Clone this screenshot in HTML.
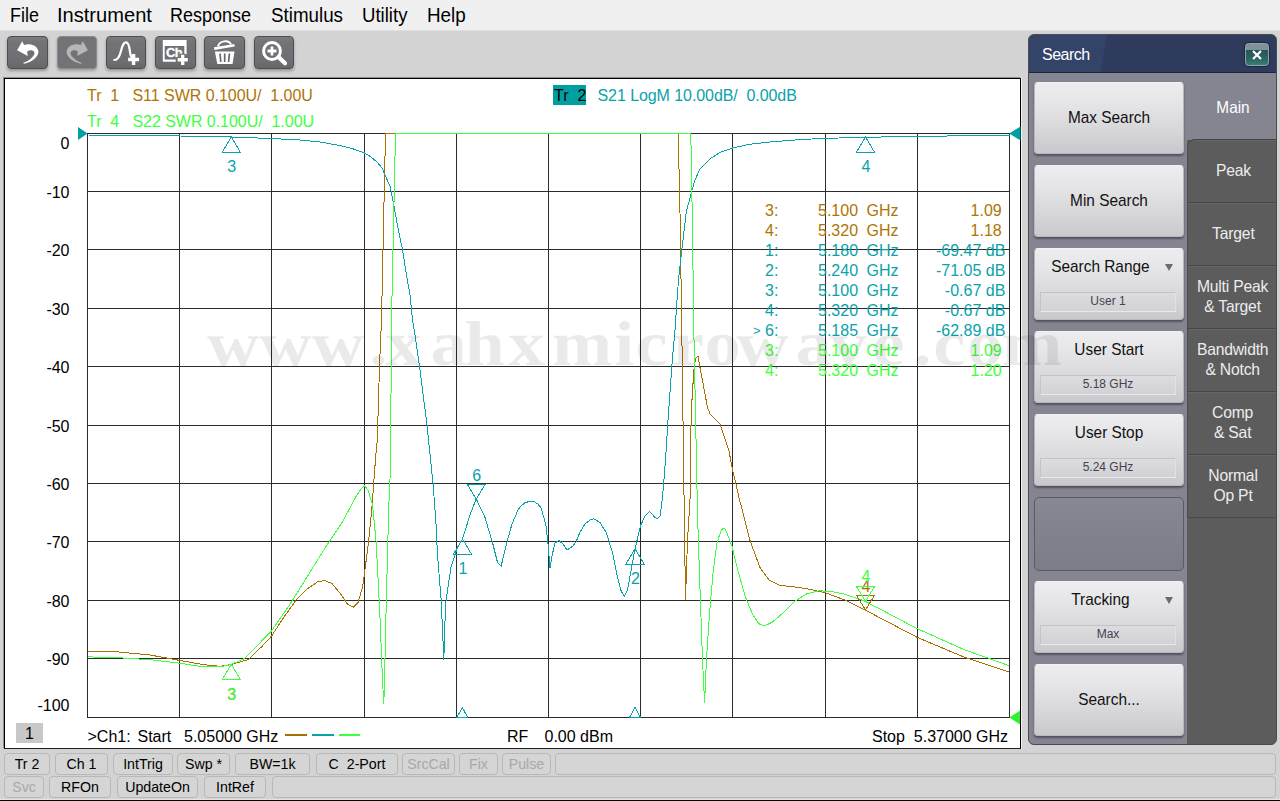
<!DOCTYPE html>
<html><head><meta charset="utf-8"><title>Network Analyzer</title>
<style>
*{box-sizing:border-box;margin:0;padding:0}
html,body{width:1280px;height:801px;overflow:hidden}
body{background:#d3d3d3;font-family:"Liberation Sans",sans-serif;position:relative;color:#000}
.abs{position:absolute}
#menubar{position:absolute;left:0;top:0;width:1280px;height:31px;background:#f0f0f0;border-bottom:1px solid #e0e0e0}
#menubar span{position:absolute;top:4px;font-size:19.5px;line-height:22px;white-space:nowrap;transform-origin:0 0}
#toolbar{position:absolute;left:0;top:31px;width:1280px;height:47px;background:#d3d3d3}
.tb{position:absolute;top:5px;width:40px;height:33px;border-radius:4px;background:linear-gradient(#7c7c80,#737377 18%,#6e6e72 80%,#67676b);border:1px solid #4e4e52;box-shadow:0 2px 3px rgba(0,0,0,.30)}
.tb.dis{background:#737377;border-color:#8a8a8e;box-shadow:0 2px 3px rgba(0,0,0,.25)}
.tb svg{position:absolute;left:-1px;top:-1px}
#plotpanel{position:absolute;left:4px;top:78px;width:1017px;height:671px;background:#fff;border:1px solid #000;border-bottom-color:#222;box-shadow:1px 0 0 #f2f2f2,-1px -1px 0 #8e8e8e}
svg.plot{position:absolute;left:0;top:0}
svg.plot text{font-family:"Liberation Sans",sans-serif}
#wm{position:absolute;left:0;top:0;pointer-events:none}
#wm text{font-family:"Liberation Serif",serif;font-weight:bold;font-size:64px;fill:rgba(0,0,0,0.082)}
.ax{font-size:16px;fill:#000}
.mk{font-size:16px}
.tt{position:absolute;font-size:16px;line-height:18px;white-space:pre;margin-top:1px}
.mr{position:absolute;left:0;width:1280px;height:20px;font-size:16px;line-height:20px}
.mr span{position:absolute;top:0;white-space:pre}
#chbox{position:absolute;left:16px;top:723px;width:27px;height:20px;background:#c8c8c8;font-size:16px;line-height:22px;text-align:center}
/* right panel */
#rp{position:absolute;left:1028px;top:34px;width:249px;height:711px;background:#5c5c5c;border-radius:6px;overflow:hidden;border:1px solid #4a4a50;box-shadow:inset 1px 0 0 #55555e}
#rptitle{position:absolute;left:0;top:0;width:249px;height:38px;background:linear-gradient(100deg,#344368 0,#344368 30%,#2e3b5d 31%,#2e3b5d 100%);color:#fff;font-size:16px;letter-spacing:-0.5px;line-height:40px;padding-left:13px;border-bottom:1px solid #1c2540}
#rpclose{position:absolute;left:216px;top:8px;width:24px;height:23px;border:1px solid #93a5ab;border-radius:3.5px;background:linear-gradient(#7f9299 0,#7f9299 28%,#285656 29%,#2d6562 70%,#3a7d78 100%);box-shadow:0 0 0 1px #1e2844}
#rpleft{position:absolute;left:0;top:38px;width:158px;height:673px;background:#858591}
#maintab{position:absolute;left:158px;top:38px;width:91px;height:67px;background:#858591;color:#fff}
.tab{position:absolute;left:158px;width:91px;height:63px;background:#5c5c5c;border-top:1px solid #464646;border-left:1px solid #4a4a4a;box-shadow:inset 0 1px 0 #666;color:#ececec;font-size:16.5px;letter-spacing:-0.2px;line-height:20px;text-align:center;display:flex;align-items:center;justify-content:center}
.tl{display:block;transform:scaleX(0.95);position:relative;top:-1px}
.sk{position:absolute;left:5px;width:150px;height:72px;border-radius:4px;background:linear-gradient(#ededef 0%,#e5e5e7 30%,#d9d9dc 62%,#c9c9cd 100%);border:1px solid #b8b8bc;border-top-color:#f2f2f4;box-shadow:0 2px 2px rgba(40,40,60,.55);font-size:17px;color:#111;text-align:center}
.sk .l1{position:absolute;left:0;width:100%;top:25px;line-height:20px;transform:scaleX(0.905)}
.sk.two .l1{top:8px}
.sk .val{position:absolute;left:5px;right:7px;top:43px;height:20px;border:1px solid #c4c4c8;border-bottom-color:#e9e9eb;border-right-color:#e2e2e5;background:rgba(255,255,255,0.10);font-size:12px;letter-spacing:0;line-height:16.5px;color:#463f52}
.sk .arr{position:absolute;right:10px;top:15px;width:0;height:0;border-left:4px solid transparent;border-right:4px solid transparent;border-top:7.5px solid #6c6c6e}
.skempty{position:absolute;left:5px;width:150px;height:74px;border-radius:5px;border:1px solid #5a5a66;background:linear-gradient(#888894,#7c7c88)}
/* status */
.sb{position:absolute;height:22px;border:1px solid #b8b8b8;border-radius:4px;background:#d5d5d5;font-size:14.2px;line-height:20px;text-align:center;white-space:pre;color:#000}
.sb.dis{color:#a8a8a8}
#bottomline{position:absolute;left:0;top:799px;width:1280px;height:2px;background:#000;border-top:1px solid #e4e4e4}
</style></head><body>
<div id="menubar">
<span style="left:9.5px;transform:scaleX(0.918)">File</span><span style="left:57.4px;transform:scaleX(1.030)">Instrument</span><span style="left:170.4px;transform:scaleX(0.921)">Response</span><span style="left:270.9px;transform:scaleX(0.963)">Stimulus</span><span style="left:361.6px;transform:scaleX(0.954)">Utility</span><span style="left:427.1px;transform:scaleX(0.966)">Help</span>
</div>
<div id="toolbar">
<div class="tb" style="left:7px;width:41px"><svg width="41" height="33" viewBox="0 0 41 33"><path d="M10.1 14.2 L15.2 5.2 L17.1 9 C20 8 24.500 8 27.9 10.1 C30.500 11.8 31.8 14.500 31.3 17 C30.500 21 26 25.500 17.500 27.7 L16 27 C21 25.500 25.500 22 27.2 18.500 C28.2 16.2 27 14.6 24.500 14.2 C23 14 21.500 14.500 20.1 15.4 L20.8 19.9 Z" fill="#fff"/></svg></div>
<div class="tb dis" style="left:57px"><svg width="40" height="33" viewBox="-1 0 40 33"><path d="M29.9 14.2 L24.8 5.2 L22.9 9 C20.0 8 15.5 8 12.1 10.1 C9.5 11.8 8.2 14.500 8.7 17 C9.5 21 14.0 25.500 22.5 27.7 L24.0 27 C19.0 25.500 14.5 22 12.8 18.500 C11.8 16.2 13.0 14.6 15.5 14.2 C17.0 14 18.5 14.500 19.9 15.4 L19.2 19.9 Z" fill="#b6b6b8"/></svg></div>
<div class="tb" style="left:106px"><svg width="40" height="33" viewBox="0 0 40 33"><path d="M8.300 24 C12 24 13.500 21 15 15 C16.500 9 17.500 6.400 20 6.400 C23 6.400 23.500 12 24 16 C24.300 18.500 24.700 20 25.500 21" fill="none" stroke="#fff" stroke-width="2.200" stroke-linecap="round"/><path d="M27.600 18v11M22.100 23.500h11" stroke="#fff" stroke-width="3.400"/></svg></div>
<div class="tb" style="left:155px;width:41px"><svg width="41" height="33" viewBox="0 0 41 33"><path d="M7.800 4h23.800v14.300h-2.300v-8.200h-19.600v13.300h11v2.300h-12.900z" fill="#fff"/><text x="11" y="21.400" font-size="13" font-weight="bold" fill="#fff" stroke="#fff" stroke-width="0.3" font-family="Liberation Sans, sans-serif" letter-spacing="-0.6">Ch</text><path d="M27.700 17.700v12.200M21.600 23.800h12.200" stroke="#6a6a6c" stroke-width="5.400"/><path d="M27.700 18.700v10.200M22.600 23.800h10.200" stroke="#fff" stroke-width="3.400"/></svg></div>
<div class="tb" style="left:204px;width:41px"><svg width="41" height="33" viewBox="0 0 41 33"><path d="M14 10.500 C15 4.500 25 3.500 27 8.500" fill="none" stroke="#fff" stroke-width="2"/><path d="M10 11.200l20.300-3.300l0.400 2.700l-20.300 3.300z" fill="#fff"/><path d="M10.900 15.600h19.600l-2 12.500h-15.200z" fill="#fff"/><path d="M16 17.500l0.800 8.500M20.700 17.500v8.500M25.400 17.500l-0.800 8.500" stroke="#68686a" stroke-width="1.700"/></svg></div>
<div class="tb" style="left:254px"><svg width="40" height="33" viewBox="0 0 40 33"><circle cx="18" cy="15" r="8.400" fill="none" stroke="#fff" stroke-width="3"/><path d="M24.500 21l6.500 6.200" stroke="#fff" stroke-width="4.200" stroke-linecap="round"/><path d="M18 10.500v9M13.500 15h9" stroke="#fff" stroke-width="2.800"/></svg></div>
</div>
<div id="plotpanel"></div>
<svg class="plot" width="1280" height="801" viewBox="0 0 1280 801">
<g fill="#2c2c2c" shape-rendering="crispEdges"><rect x="87" y="133" width="1" height="585" /><rect x="179" y="133" width="1" height="585" /><rect x="271" y="133" width="1" height="585" /><rect x="364" y="133" width="1" height="585" /><rect x="456" y="133" width="1" height="585" /><rect x="548" y="133" width="1" height="585" /><rect x="640" y="133" width="1" height="585" /><rect x="732" y="133" width="1" height="585" /><rect x="825" y="133" width="1" height="585" /><rect x="917" y="133" width="1" height="585" /><rect x="1009" y="133" width="1" height="585" /><rect x="87" y="133" width="923" height="1" /><rect x="87" y="191" width="923" height="1" /><rect x="87" y="249" width="923" height="1" /><rect x="87" y="308" width="923" height="1" /><rect x="87" y="366" width="923" height="1" /><rect x="87" y="425" width="923" height="1" /><rect x="87" y="483" width="923" height="1" /><rect x="87" y="541" width="923" height="1" /><rect x="87" y="600" width="923" height="1" /><rect x="87" y="658" width="923" height="1" /><rect x="87" y="717" width="923" height="1" /></g>
<text x="69.5" y="149.0" text-anchor="end" class="ax">0</text>
<text x="69.5" y="198.1" text-anchor="end" class="ax">-10</text>
<text x="69.5" y="256.1" text-anchor="end" class="ax">-20</text>
<text x="69.5" y="315.1" text-anchor="end" class="ax">-30</text>
<text x="69.5" y="373.1" text-anchor="end" class="ax">-40</text>
<text x="69.5" y="432.1" text-anchor="end" class="ax">-50</text>
<text x="69.5" y="490.1" text-anchor="end" class="ax">-60</text>
<text x="69.5" y="548.1" text-anchor="end" class="ax">-70</text>
<text x="69.5" y="607.1" text-anchor="end" class="ax">-80</text>
<text x="69.5" y="665.1" text-anchor="end" class="ax">-90</text>
<text x="69.5" y="710.6" text-anchor="end" class="ax">-100</text>
<polyline points="87.7,651.6 115.0,651.6 150.0,655.0 179.7,660.4 202.4,664.5 220.0,666.3 231.0,664.5 248.0,659.7 262.0,646.4 271.7,635.9 283.0,618.4 296.9,599.0 307.4,588.7 317.8,581.7 324.8,580.6 331.8,583.4 340.6,593.9 347.6,604.4 353.5,607.2 358.0,602.6 362.6,586.9 365.0,569.4 368.6,541.4 372.0,506.5 375.6,457.5 377.3,440.0 379.5,366.0 381.5,320.0 385.5,133.5 678.2,133.5 680.0,212.5 681.8,330.0 683.8,480.0 685.5,600.0 687.5,540.0 690.0,500.0 691.2,412.5 693.8,371.0 695.5,358.8 698.0,356.2 700.0,367.5 703.8,387.5 707.5,407.5 710.0,413.8 715.0,418.8 720.0,423.8 723.8,435.0 728.8,450.0 732.5,470.0 736.2,485.0 739.5,500.0 742.3,510.0 749.8,540.0 760.3,568.3 769.3,580.3 779.8,585.4 794.7,586.9 809.7,589.3 825.6,592.9 845.0,600.0 865.0,610.0 917.5,637.5 965.0,657.5 1008.8,671.8" fill="none" stroke="#a87000" stroke-width="1" stroke-linejoin="round" shape-rendering="crispEdges"/>
<polyline points="87.5,135.0 143.0,135.5 180.0,136.0 231.0,137.0 271.0,138.5 300.0,140.0 320.0,142.0 340.0,145.5 352.0,148.5 364.5,153.0 371.0,157.0 377.5,162.5 382.0,168.0 385.0,175.0 390.0,186.0 393.8,205.0 398.0,228.0 402.5,249.8 406.0,272.0 410.0,295.0 412.5,320.0 414.2,330.0 419.5,366.0 427.0,425.0 433.0,483.0 435.8,520.0 437.5,555.0 441.2,600.0 443.8,659.5 445.5,605.0 447.5,590.0 451.2,566.0 457.5,547.5 462.5,538.8 470.0,515.0 476.2,498.8 485.0,517.5 492.5,542.5 497.5,562.5 501.2,566.2 503.0,558.0 507.0,542.0 512.0,524.0 518.0,510.0 521.0,506.0 525.0,502.6 530.0,501.4 534.0,501.6 538.0,504.0 541.0,508.0 544.0,518.0 546.0,526.0 548.0,544.0 550.0,568.0 552.0,556.0 555.0,543.0 559.0,540.6 563.0,544.0 567.0,550.0 570.0,548.0 573.0,546.0 576.0,542.0 580.0,532.0 585.0,524.0 590.0,520.0 593.8,518.8 600.0,522.5 606.2,532.5 612.5,552.5 617.5,577.5 621.2,591.2 624.5,596.2 627.5,590.0 631.2,570.0 635.0,548.8 640.8,525.0 645.0,516.2 649.5,511.2 653.8,516.2 657.0,519.2 660.0,516.2 662.5,497.5 664.5,472.5 665.5,460.0 668.0,420.0 672.5,357.5 675.0,330.0 677.0,300.0 678.5,280.0 681.2,255.0 686.2,212.5 692.0,190.0 695.0,180.0 700.0,168.8 710.0,158.8 720.0,152.5 732.5,148.0 750.0,144.2 770.0,142.0 795.0,140.0 820.0,138.5 865.0,137.3 920.0,136.3 1010.0,135.3" fill="none" stroke="#0aa2aa" stroke-width="1" stroke-linejoin="round" shape-rendering="crispEdges"/>
<polyline points="87.7,656.9 115.0,657.5 150.0,659.7 179.7,663.2 202.4,666.7 220.0,667.0 231.0,664.5 244.4,658.6 254.9,648.1 271.7,630.6 289.9,604.4 307.4,576.4 324.8,548.4 342.3,522.2 356.3,496.0 361.6,488.3 364.5,485.8 368.0,490.0 372.5,505.0 376.2,542.5 380.0,617.5 382.5,680.0 383.8,703.8 384.5,680.0 386.2,605.0 388.8,505.0 390.0,480.0 390.8,425.0 391.5,320.0 395.5,133.5 690.8,133.5 692.5,230.0 693.8,330.0 695.5,412.5 696.8,480.0 698.3,540.0 700.4,600.0 702.5,660.0 704.6,703.0 706.4,660.0 709.4,615.0 713.3,570.0 716.9,543.0 719.5,535.0 721.3,530.5 722.6,528.6 723.8,528.0 725.0,529.0 727.0,533.0 729.5,539.5 731.9,546.0 737.8,570.0 745.3,596.8 752.8,614.7 758.8,623.7 764.2,626.0 772.3,622.2 782.8,613.2 794.7,601.3 806.7,593.8 818.7,590.8 830.7,591.4 845.6,594.4 865.0,601.2 917.5,628.8 965.0,650.0 1008.8,665.5" fill="none" stroke="#40ff40" stroke-width="1" stroke-linejoin="round" shape-rendering="crispEdges"/>
<polygon points="78,127 87.5,133.5 78,140" fill="#00a0a0"/>
<polygon points="1020.5,126.5 1009.3,133.5 1020.5,140.5" fill="#00a0a0"/>
<polygon points="1020,710.5 1009.5,717.5 1020,724.5" fill="#30f030"/>
<polygon points="231.3,137.0 222.1,152.5 240.5,152.5" fill="none" stroke="#0aa2aa" stroke-width="1" shape-rendering="crispEdges"/><text x="231.8" y="172.0" fill="#0aa2aa" text-anchor="middle" class="mk">3</text>
<polygon points="865.5,137.0 856.3,152.5 874.7,152.5" fill="none" stroke="#0aa2aa" stroke-width="1" shape-rendering="crispEdges"/><text x="866.0" y="172.0" fill="#0aa2aa" text-anchor="middle" class="mk">4</text>
<polygon points="462.5,539.0 453.3,554.5 471.7,554.5" fill="none" stroke="#0aa2aa" stroke-width="1" shape-rendering="crispEdges"/><text x="463.0" y="574.0" fill="#0aa2aa" text-anchor="middle" class="mk">1</text>
<polygon points="635.0,548.8 625.8,564.3 644.2,564.3" fill="none" stroke="#0aa2aa" stroke-width="1" shape-rendering="crispEdges"/><text x="635.5" y="584.0" fill="#0aa2aa" text-anchor="middle" class="mk">2</text>
<polygon points="476.2,499.0 467.1,484.0 485.4,484.0" fill="none" stroke="#0aa2aa" stroke-width="1" shape-rendering="crispEdges"/><text x="476.8" y="481.0" fill="#0aa2aa" text-anchor="middle" class="mk">6</text>
<polygon points="231.3,664.3 222.1,679.8 240.5,679.8" fill="none" stroke="#a87000" stroke-width="1" shape-rendering="crispEdges"/><text x="231.8" y="699.5" fill="#a87000" text-anchor="middle" class="mk">3</text>
<polygon points="231.3,664.3 222.1,679.8 240.5,679.8" fill="none" stroke="#40ff40" stroke-width="1" shape-rendering="crispEdges"/><text x="231.8" y="699.5" fill="#40ff40" text-anchor="middle" class="mk">3</text>
<polygon points="865.5,610.0 856.3,595.0 874.7,595.0" fill="none" stroke="#a87000" stroke-width="1" shape-rendering="crispEdges"/><text x="866.0" y="591.5" fill="#a87000" text-anchor="middle" class="mk">4</text>
<polygon points="865.5,601.3 856.3,586.3 874.7,586.3" fill="none" stroke="#40ff40" stroke-width="1" shape-rendering="crispEdges"/><text x="866.0" y="581.5" fill="#40ff40" text-anchor="middle" class="mk">4</text>
<polygon points="462.3,707.5 456.8,717.5 467.8,717.5" fill="none" stroke="#0aa2aa" stroke-width="1" shape-rendering="crispEdges"/>
<polygon points="635.0,707.5 629.5,717.5 640.5,717.5" fill="none" stroke="#0aa2aa" stroke-width="1" shape-rendering="crispEdges"/>
<rect x="285" y="734" width="22" height="2" fill="#a87000"/>
<rect x="312" y="734" width="22" height="2" fill="#0aa2aa"/>
<rect x="339" y="734" width="21" height="2" fill="#40ff40"/>
</svg>
<div class="tt" style="left:87px;top:86px;color:#ae7404;letter-spacing:-0.03px">Tr  1   S11 SWR 0.100U/  1.00U</div>
<div class="tt" style="left:87px;top:112px;color:#40ff40;letter-spacing:-0.03px">Tr  4   S22 SWR 0.100U/  1.00U</div>
<div class="abs" style="left:553px;top:85px;width:33px;height:20px;background:#00a0a0"></div>
<div class="tt" style="left:554px;top:86px;color:#000">Tr  2</div>
<div class="tt" style="left:597.500px;top:86px;color:#0aa2aa;letter-spacing:-0.07px">S21 LogM 10.00dB/  0.00dB</div>
<div class="mr" style="top:201px;color:#ae7404"><span style="left:765px">3:</span><span style="left:818px">5.100</span><span style="left:866.5px">GHz</span><span style="right:278.3px">1.09</span></div>
<div class="mr" style="top:221px;color:#ae7404"><span style="left:765px">4:</span><span style="left:818px">5.320</span><span style="left:866.5px">GHz</span><span style="right:278.3px">1.18</span></div>
<div class="mr" style="top:241px;color:#0aa2aa"><span style="left:765px">1:</span><span style="left:818px">5.180</span><span style="left:866.5px">GHz</span><span style="right:274.7px">-69.47 dB</span></div>
<div class="mr" style="top:261px;color:#0aa2aa"><span style="left:765px">2:</span><span style="left:818px">5.240</span><span style="left:866.5px">GHz</span><span style="right:274.7px">-71.05 dB</span></div>
<div class="mr" style="top:281px;color:#0aa2aa"><span style="left:765px">3:</span><span style="left:818px">5.100</span><span style="left:866.5px">GHz</span><span style="right:274.7px">-0.67 dB</span></div>
<div class="mr" style="top:301px;color:#0aa2aa"><span style="left:765px">4:</span><span style="left:818px">5.320</span><span style="left:866.5px">GHz</span><span style="right:274.7px">-0.67 dB</span></div>
<div class="mr" style="top:321px;color:#0aa2aa"><span style="left:753px;font-size:13px">&gt;</span><span style="left:765px">6:</span><span style="left:818px">5.185</span><span style="left:866.5px">GHz</span><span style="right:274.7px">-62.89 dB</span></div>
<div class="mr" style="top:341px;color:#40ff40"><span style="left:765px">3:</span><span style="left:818px">5.100</span><span style="left:866.5px">GHz</span><span style="right:278.3px">1.09</span></div>
<div class="mr" style="top:361px;color:#40ff40"><span style="left:765px">4:</span><span style="left:818px">5.320</span><span style="left:866.5px">GHz</span><span style="right:278.3px">1.20</span></div>
<div id="chbox">1</div>
<div class="tt" style="left:87.500px;top:727px">&gt;Ch1:</div><div class="tt" style="left:137.500px;top:727px">Start</div><div class="tt" style="left:184px;top:727px">5.05000 GHz</div>
<div class="tt" style="left:507px;top:727px">RF</div><div class="tt" style="left:544.500px;top:727px">0.00 dBm</div>
<div class="tt" style="left:872px;top:727px">Stop  5.37000 GHz</div>

<div id="rp">
<div id="rptitle">Search</div>
<div id="rpclose"><svg width="22" height="21" viewBox="0 0 22 21"><path d="M7 7l8 8M15 7l-8 8" stroke="#fff" stroke-width="2.200"/></svg></div>
<div id="rpleft">
<div class="sk" style="top:9px"><div class="l1">Max Search</div></div>
<div class="sk" style="top:92px"><div class="l1">Min Search</div></div>
<div class="sk two" style="top:175px"><div class="l1" style="padding-right:19px">Search Range</div><div class="arr"></div><div class="val">User 1</div></div>
<div class="sk two" style="top:258px"><div class="l1">User Start</div><div class="val">5.18 GHz</div></div>
<div class="sk two" style="top:341px"><div class="l1">User Stop</div><div class="val">5.24 GHz</div></div>
<div class="skempty" style="top:424px"></div>
<div class="sk two" style="top:508px"><div class="l1" style="padding-right:19px">Tracking</div><div class="arr"></div><div class="val">Max</div></div>
<div class="sk" style="top:591px"><div class="l1">Search...</div></div>
</div>
<div id="maintab"><div style="position:absolute;left:1px;width:90px;top:24px;text-align:center;font-size:16.500px;line-height:20px;transform:scaleX(0.93)">Main</div></div>
<div class="tab" style="top:104px;border-top-left-radius:8px"><span class="tl">Peak</span></div>
<div class="tab" style="top:167px"><span class="tl">Target</span></div>
<div class="tab" style="top:230px"><span class="tl">Multi Peak<br>&amp; Target</span></div>
<div class="tab" style="top:293px"><span class="tl">Bandwidth<br>&amp; Notch</span></div>
<div class="tab" style="top:356px"><span class="tl">Comp<br>&amp; Sat</span></div>
<div class="tab" style="top:419px;border-bottom:1px solid #4a4a4a;height:64px"><span class="tl">Normal<br>Op Pt</span></div>
</div>

<div class="sb" style="left:4px;top:753px;width:46px">Tr 2</div>
<div class="sb" style="left:55px;top:753px;width:53px">Ch 1</div>
<div class="sb" style="left:113px;top:753px;width:60px">IntTrig</div>
<div class="sb" style="left:177px;top:753px;width:53px">Swp *</div>
<div class="sb" style="left:235px;top:753px;width:75px">BW=1k</div>
<div class="sb" style="left:316px;top:753px;width:82px">C  2-Port</div>
<div class="sb dis" style="left:402px;top:753px;width:53px">SrcCal</div>
<div class="sb dis" style="left:459px;top:753px;width:39px">Fix</div>
<div class="sb dis" style="left:502px;top:753px;width:49px">Pulse</div>
<div class="sb" style="left:555px;top:753px;width:721px"></div>
<div class="sb dis" style="left:4px;top:776px;width:40px">Svc</div>
<div class="sb" style="left:49px;top:776px;width:62px">RFOn</div>
<div class="sb" style="left:117px;top:776px;width:81px">UpdateOn</div>
<div class="sb" style="left:204px;top:776px;width:62px">IntRef</div>
<div class="sb" style="left:272px;top:776px;width:1004px"></div>
<div id="bottomline"></div>
<svg id="wm" width="1280" height="801" viewBox="0 0 1280 801"><text transform="scale(1.13,1)" x="183.1 229.6 276.0 326.9 341.1 380.9 411.0 449.7 488.4 543.7 562.3 594.6 623.4 651.7 703.9 734.9 772.1 808.3 826.0 855.7 886.8" y="364.6">www.xahxmicrowave.com</text></svg>
</body></html>
